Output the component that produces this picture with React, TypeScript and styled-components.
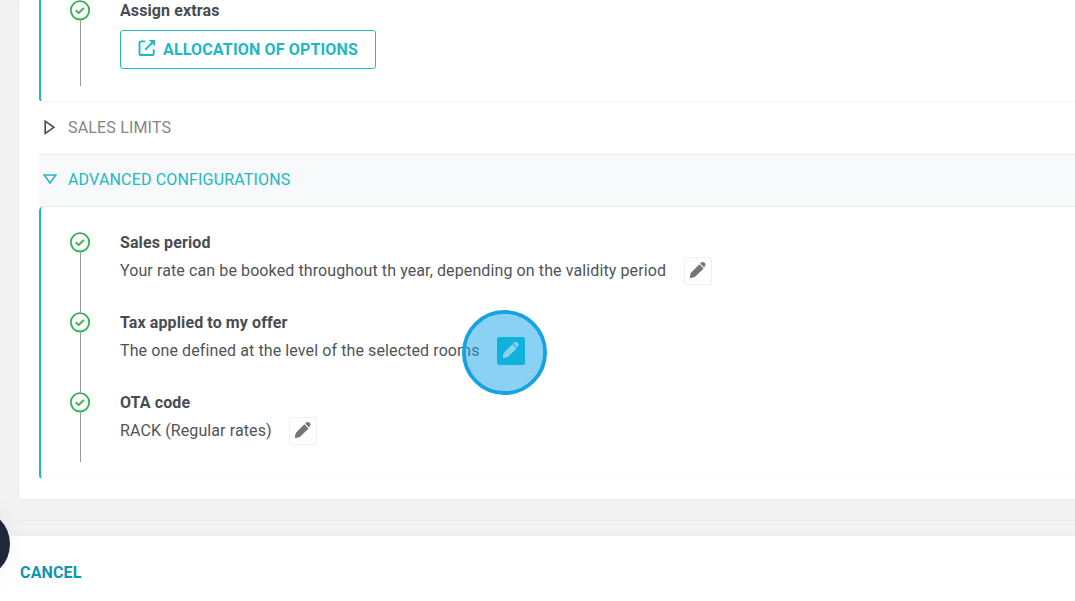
import * as React from 'react';
import styled, { createGlobalStyle } from 'styled-components';

const COLORS = {
  page: '#f2f2f2',
  teal: '#20b8c5',
  tealDark: '#0d96b2',
  green: '#34b158',
  text: '#505358',
  title: '#494c52',
  muted: '#858585',
  line: '#e6e9ec',
};

type Step = {
  title: string;
  text: string;
  active?: boolean;
};

const STEPS: Step[] = [
  {
    title: 'Sales period',
    text: 'Your rate can be booked throughout th year, depending on the validity period',
  },
  {
    title: 'Tax applied to my offer',
    text: 'The one defined at the level of the selected rooms',
    active: true,
  },
  { title: 'OTA code', text: 'RACK (Regular rates)' },
];

function CheckIcon() {
  return (
    <CheckSvg width={22} height={22} viewBox="0 0 22 22" fill="none">
      <circle cx="11" cy="11.3" r="9.2" fill="#fff" stroke={COLORS.green} strokeWidth="1.8" />
      <path d="M6.700 11.300l3 2.700 5.200-5.100" stroke={COLORS.green} strokeWidth="1.900" />
    </CheckSvg>
  );
}

function PencilIcon() {
  return (
    <svg width={18} height={18} viewBox="0 0 18 18" fill="currentColor">
      <path d="M1 16.900c-.1-2 .3-4.200 1.200-5.500l8.200-8.100 4.200 4.200-8.200 8.100c-1.300.9-3.400 1.400-5.400 1.300z" />
      <path d="M11.200 2.500l.7-.7c1.200-1.200 2.700-1.200 3.800-.1s1.100 2.700-.1 3.900l-.5.900z" />
    </svg>
  );
}

function ExternalIcon() {
  return (
    <svg width={18} height={18} viewBox="0 0 18 18" fill="none" stroke="currentColor">
      <path
        d="M7.300 2.400H3.200C2.200 2.400 1.500 3 1.500 4v10.400c0 1 .7 1.600 1.700 1.600h10.900c1 0 1.600-.6 1.600-1.600v-4.100"
        strokeWidth="1.900"
      />
      <path d="M7 10.900l7.700-7.700" strokeWidth="2" />
      <path d="M10.800 1h6.200v6.200z" fill="currentColor" stroke="none" />
    </svg>
  );
}

function App() {
  return (
    <Page>
      <GlobalStyle />
      <Card>
        <ExtrasPanel>
          <StepRow>
            <Marker>
              <CheckIcon />
            </Marker>
            <StepBody>
              <StepTitle>Assign extras</StepTitle>
              <OptionsButton>
                <ExternalIcon />
                <span>ALLOCATION OF OPTIONS</span>
              </OptionsButton>
            </StepBody>
          </StepRow>
        </ExtrasPanel>
        <SectionHeader>
          <svg width={13} height={15} viewBox="0 0 13 15" fill="none">
            <path d="M2.200 1.200v12.200l8.700-6.100z" stroke="#4a4a4a" strokeWidth="1.600" />
          </svg>
          SALES LIMITS
        </SectionHeader>
        <SectionHeader $open>
          <svg width={14} height={15} viewBox="0 0 14 15" fill="none">
            <path d="M1.200 3h11.600l-5.800 8z" stroke={COLORS.teal} strokeWidth="1.600" />
          </svg>
          ADVANCED CONFIGURATIONS
        </SectionHeader>
        <StepsPanel>
          {STEPS.map(({ title, text, active }) => (
            <StepRow key={title}>
              <Marker>
                <CheckIcon />
              </Marker>
              <StepBody>
                <StepTitle>{title}</StepTitle>
                <StepLine>
                  <span>{text}</span>
                  <EditButton $active={active} aria-label="Edit">
                    <PencilIcon />
                    {active && <ClickHighlight />}
                  </EditButton>
                </StepLine>
              </StepBody>
            </StepRow>
          ))}
        </StepsPanel>
      </Card>
      <Divider />
      <Footer>
        <CancelButton>CANCEL</CancelButton>
      </Footer>
      <ChatBubble />
    </Page>
  );
}

const GlobalStyle = createGlobalStyle`
  * {
    box-sizing: border-box;
  }

  body {
    margin: 0;
    background: ${COLORS.page};
    font-family: Roboto, sans-serif;
    font-size: 16px;
    letter-spacing: 0.105px;
    color: ${COLORS.text};
    overflow: hidden;
  }

  button {
    font: inherit;
    letter-spacing: inherit;
    background: none;
    border: 0;
    padding: 0;
  }
`;

const Page = styled.main`
  position: relative;
  height: 601px;
  overflow: hidden;
  display: flex;
  flex-direction: column;
`;

const Card = styled.section`
  height: 499px;
  margin-left: 19px;
  padding-left: 20px;
  background: #fff;
  border-radius: 0 0 0 4px;
  box-shadow: 0 0 3px rgba(0, 0, 0, 0.06);
`;

const Panel = styled.div`
  border-left: 2px solid ${COLORS.teal};
  border-bottom: 1px solid #fafafa;
  padding-left: 28px;
`;

const ExtrasPanel = styled(Panel)`
  height: 102px;
  border-radius: 0 0 0 4px;
`;

const StepsPanel = styled(Panel)`
  height: 272px;
  padding-top: 24px;
  border-radius: 4px 0 0 4px;
`;

const SectionHeader = styled.div<{ $open?: boolean }>`
  display: flex;
  align-items: center;
  gap: ${(p) => (p.$open ? 11 : 12)}px;
  height: ${(p) => (p.$open ? 52 : 53)}px;
  padding: 0 0 2px 4px;
  border-bottom: 1px solid ${COLORS.line};
  background: ${(p) => (p.$open ? '#f7f9fb' : '#fff')};
  color: ${(p) => (p.$open ? COLORS.teal : COLORS.muted)};
  letter-spacing: 0.17px;
`;

const StepRow = styled.div`
  display: flex;
  height: 80px;

  ${ExtrasPanel} & {
    height: 85px;
  }
`;

const Marker = styled.div`
  width: 22px;
  margin-right: 29px;
  display: flex;
  flex-direction: column;
  align-items: center;

  &::after {
    content: '';
    width: 1px;
    flex: 1;
    margin: -1px 0 -1px 1px;
    background: #999;
  }

  ${StepsPanel} ${StepRow}:last-child & {
    height: 70px;
  }
`;

const CheckSvg = styled.svg`
  flex: none;
  margin-left: -1px;

  ${ExtrasPanel} & {
    margin-top: -1px;
  }
`;

const StepBody = styled.div`
  flex: 1;

  ${StepsPanel} & {
    padding-top: 1px;
  }
`;

const StepTitle = styled.h3`
  margin: 0;
  font-size: 16px;
  line-height: 22px;
  font-weight: 700;
  color: ${COLORS.title};
`;

const StepLine = styled.div`
  display: flex;
  align-items: center;
  gap: 17.6px;
  height: 28px;
  margin-top: 3px;
  line-height: 18px;

  > span {
    margin-top: -1px;
  }
`;

const OptionsButton = styled.button`
  display: flex;
  align-items: center;
  gap: 7px;
  width: 256px;
  height: 39px;
  margin-top: 8px;
  padding: 0 0 0 17px;
  border: 1px solid ${COLORS.teal};
  border-radius: 3px;
  color: ${COLORS.teal};
  font-weight: 700;
  letter-spacing: 0.16px;
  white-space: nowrap;

  svg {
    flex: none;
    margin-top: -3px;
  }
`;

const EditButton = styled.button<{ $active?: boolean }>`
  position: relative;
  display: grid;
  place-items: center;
  width: 28px;
  height: 28px;
  border: 1px solid ${(p) => (p.$active ? '#0bc1d1' : '#f0f0f0')};
  border-radius: 2px;
  background: ${(p) => (p.$active ? '#0bc1d1' : '#fff')};
  color: ${(p) => (p.$active ? '#fff' : '#727579')};

  svg {
    margin-top: -2px;
  }
`;

/* click marker laid over the edit button */
const ClickHighlight = styled.span`
  position: absolute;
  top: -28px;
  left: -36px;
  width: 85px;
  height: 85px;
  border: 4px solid #16a3e3;
  border-radius: 50%;
  background: rgba(21, 163, 231, 0.5);
  background-clip: padding-box;
`;

const Divider = styled.div`
  height: 1px;
  margin-top: 21px;
  background: #eeeeee;
`;

const Footer = styled.footer`
  display: flex;
  align-items: center;
  height: 65px;
  margin-top: 15px;
  padding: 8px 20px 0;
  background: #fff;
  box-shadow: 0 0 8px rgba(0, 0, 0, 0.03);
`;

const CancelButton = styled.button`
  color: ${COLORS.tealDark};
  font-weight: 700;
  letter-spacing: 0.16px;
`;

const ChatBubble = styled.div`
  position: absolute;
  left: -60px;
  top: 509px;
  width: 70px;
  height: 70px;
  border-radius: 50%;
  background: #1d2939;
  box-shadow: 0 1px 30px rgba(0, 0, 0, 0.05);
`;

export default App;
